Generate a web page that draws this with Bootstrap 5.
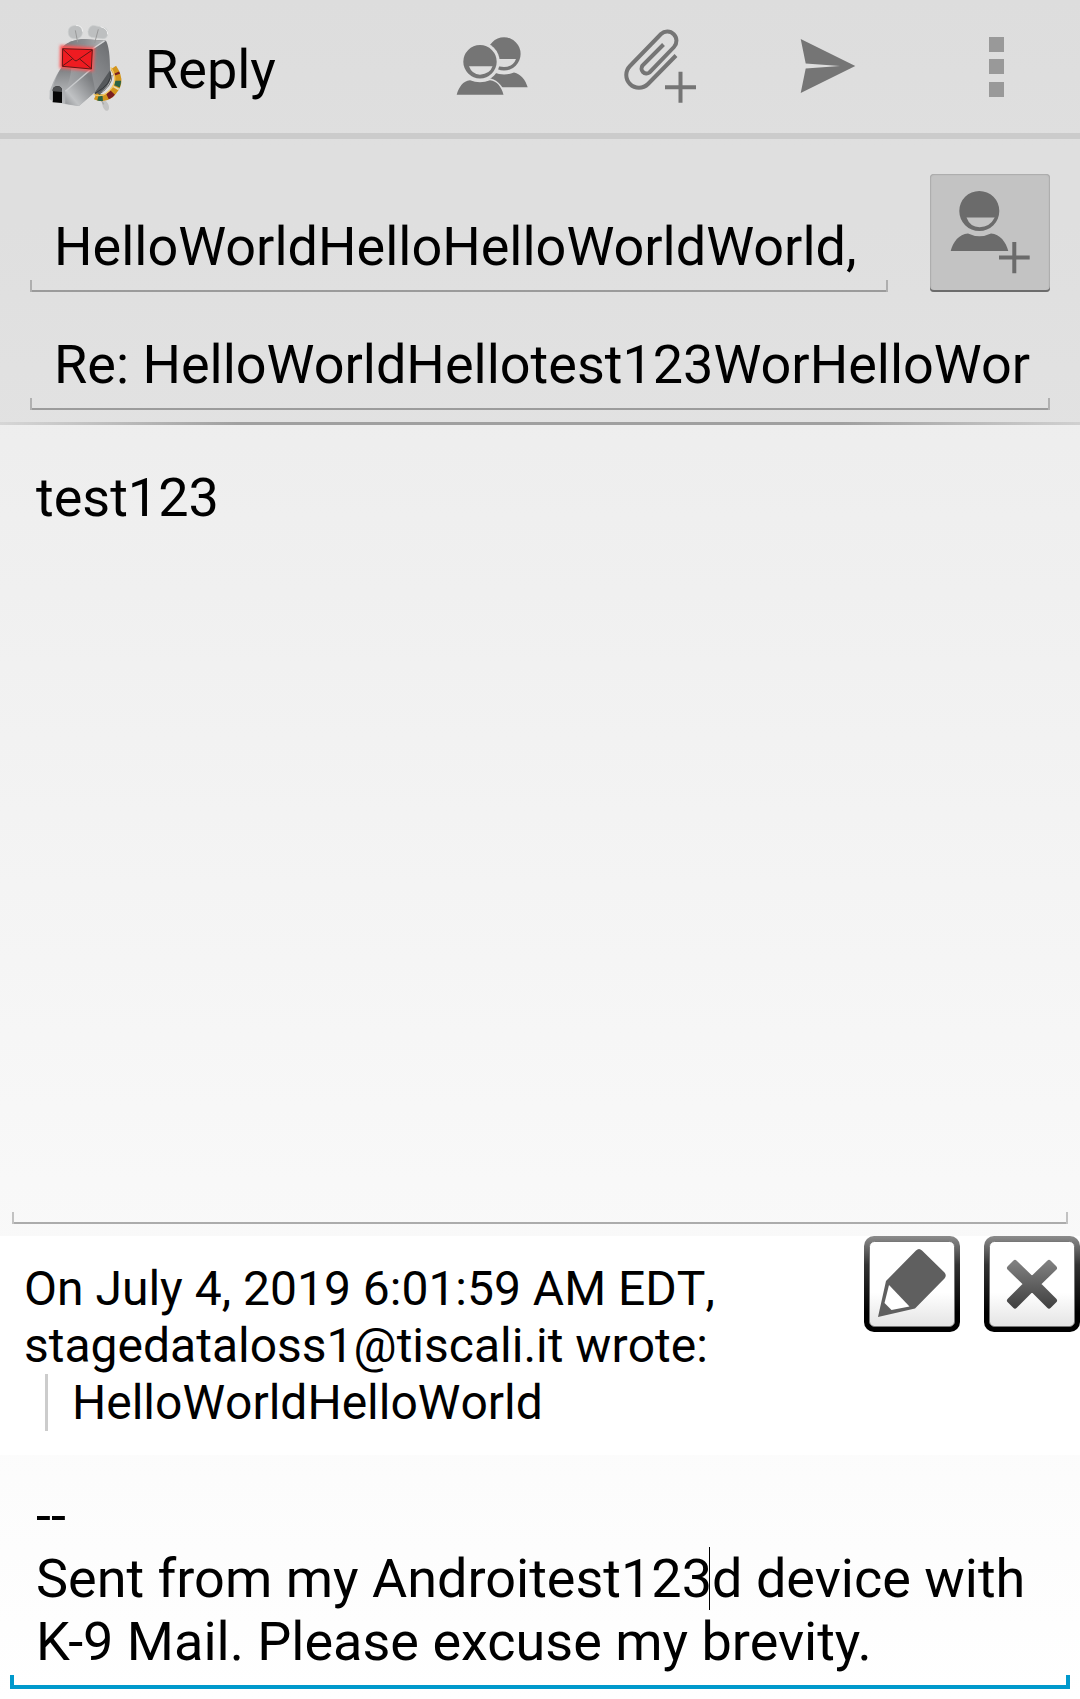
<!DOCTYPE html>
<html lang="en">
<head>
<meta charset="utf-8">
<meta name="viewport" content="width=device-width, initial-scale=1">
<title>Reply</title>
<link href="https://cdn.jsdelivr.net/npm/bootstrap@5.3.0/dist/css/bootstrap.min.css" rel="stylesheet">
<style>
  body {
    font-family: Roboto, "Liberation Sans", sans-serif;
    color: #000;
    font-size: 54px;
    line-height: 63px;
    background: linear-gradient(#e8e8e8, #fff) no-repeat;
  }
  svg { display: block; }

  .action-bar { background: rgba(0, 0, 0, .047); border-bottom: 6px solid #cbcbcb; height: 139px; padding-left: 36px; }
  .action-title { font-size: 54px; line-height: 63px; font-weight: 400; padding-top: 5px; margin-left: 13px; }
  .action-btn { width: 168px; height: 130px; border-radius: 0; }

  .compose-head { background: rgba(0, 0, 0, .047); padding: 35px 30px 12px; }
  .head-rule { height: 3px; background: linear-gradient(90deg, #d6d6d6, #a0a0a0 22%, #a0a0a0 78%, #d0d0d0); }
  .address-row { gap: 42px; margin-bottom: 28px; }

  /* Text field with a bottom line and short upright ends */
  .holo {
    --line: rgba(0, 0, 0, .31);
    --edge: rgba(0, 0, 0, .22);
    display: block;
    width: 100%;
    border: 0;
    border-radius: 0;
    outline: 0;
    resize: none;
    overflow: hidden;
    color: #000;
    font-size: 54px;
    line-height: 63px;
    background:
      linear-gradient(var(--line), var(--line)) 2px 100% / calc(100% - 4px) 2px no-repeat,
      linear-gradient(var(--edge), var(--edge)) 0 100% / 2px 12px no-repeat,
      linear-gradient(var(--edge), var(--edge)) 100% 100% / 2px 12px no-repeat;
  }
  .holo-input { height: 90px; padding: 13px 18px 14px 24px; }
  .holo-message { padding: 41px 24px 0; }
  .holo-signature {
    height: 205px;
    padding: 0 26px;
    background:
      linear-gradient(#0099cc, #0099cc) 0 100% / 100% 4px no-repeat,
      linear-gradient(#0099cc, #0099cc) 0 100% / 4px 14px no-repeat,
      linear-gradient(#0099cc, #0099cc) 100% 100% / 4px 14px no-repeat;
  }
  .add-contact {
    width: 120px;
    height: 118px;
    background: #c3c3c3;
    border: 0;
    border-radius: 4px;
    box-shadow: inset 0 -2px 0 #6c6c6c, inset 0 0 2px rgba(0, 0, 0, .4);
  }

  .message-area { padding: 0 12px 12px; min-height: 300px; }
  .quoted { background: #fff; font-size: 48px; line-height: 57px; font-kerning: none; }
  .quoted-text { padding: 24px; }
  .quoted-text blockquote { border-left: 3px solid #ccc; margin: 0 0 0 21px; padding-left: 24px; font-size: 48px; }
  .signature-area { padding: 29px 10px 10px; }
  .caret { left: 709px; top: 92px; width: 1px; height: 63px; background: #000; }
</style>
</head>
<body>
<div class="d-flex flex-column min-vh-100">
  <header class="action-bar d-flex align-items-center">
    <svg width="96" height="96" viewBox="18 24 288 288" aria-hidden="true">
      <defs>
        <linearGradient id="k9top" x1="0" y1="0" x2="1" y2="0"><stop offset="0" stop-color="#77797c"/><stop offset=".5" stop-color="#8d8f92"/><stop offset="1" stop-color="#b4b6b8"/></linearGradient>
        <linearGradient id="k9side" x1="0" y1="1" x2="1" y2="0"><stop offset="0" stop-color="#c4c6c8"/><stop offset=".5" stop-color="#929497"/><stop offset="1" stop-color="#696b6e"/></linearGradient>
        <linearGradient id="k9cheek" x1="0" y1="1" x2=".8" y2=".2"><stop offset="0" stop-color="#8f9194"/><stop offset=".3" stop-color="#c0c2c4"/><stop offset="1" stop-color="#7c7e81"/></linearGradient>
        <linearGradient id="k9nose" x1="0" y1="0" x2="0" y2="1"><stop offset="0" stop-color="#797b7e"/><stop offset="1" stop-color="#b0b2b4"/></linearGradient>
        <filter id="k9glow" x="-30%" y="-40%" width="160%" height="180%"><feGaussianBlur stdDeviation="5"/></filter>
      </defs>
      <ellipse cx="227" cy="284" rx="9" ry="16" fill="#c4c4c4" transform="rotate(-20 227 284)"/>
      <path d="M213 266l8 14" stroke="#aaa" stroke-width="4"/>
      <path d="M238 172Q259 214 198 256L190 238 232 180Z" fill="#55585b"/>
      <path d="M241 184Q249 217 194 248M246 192Q248 226 200 255" fill="none" stroke="#25282b" stroke-width="2"/>
      <path d="M250 170Q282 216 240 252Q219 267 196 256" fill="none" stroke="#d3951c" stroke-width="20"/>
      <path d="M250 170Q282 216 240 252Q219 267 196 256" fill="none" stroke="#2b6345" stroke-width="19" stroke-dasharray="0 42 17 57 14 100"/>
      <path d="M250 170Q282 216 240 252Q219 267 196 256" fill="none" stroke="#7b1f20" stroke-width="19" stroke-dasharray="0 17 7 58 19 200"/>
      <path d="M250 170Q282 216 240 252Q219 267 196 256" fill="none" stroke="#eadcab" stroke-width="19" stroke-dasharray="0 62 5 200"/>
      <path d="M242 169Q272 214 229 247Q211 259 191 250" fill="none" stroke="#f2c765" stroke-width="4"/>
      <path d="M98 108Q118 87 158 84L228 89Q240 110 240 178L196 242 147 285Q95 281 59 264L61 235Q80 185 98 166Z" fill="url(#k9side)"/>
      <path d="M98 108Q118 87 158 84L228 89 187 116Z" fill="url(#k9top)"/>
      <path d="M97 166L124 172Q121 207 106 241L97 228 68 233Q76 197 97 166Z" fill="url(#k9nose)"/>
      <path d="M106 241L184 178 196 242 147 285 106 278Z" fill="url(#k9cheek)"/>
      <path d="M106 241L183 175" stroke="#c9cbcd" stroke-width="4"/>
      <path d="M187 114L223 90" stroke="#d5d6d7" stroke-width="4"/>
      <path d="M68 274V237Q70 226 82 226Q96 226 96 239V276Z" fill="#060606"/>
      <path d="M68 241V236Q70 226 82 226Q96 226 96 239V243Z" fill="#4e5052"/>
      <path d="M59 238L68 240 68 271 59 265Z" fill="#b9bbbd"/>
      <path d="M96 109L188 115 185 175 95 166Z" fill="#ff3434" stroke="#ff5555" stroke-width="12" filter="url(#k9glow)"/>
      <path d="M98 113L187 116 184 174 97 166Z" fill="#ef1b21" stroke="#611717" stroke-width="3"/>
      <path d="M98 114L134 148Q138 152 143 147L187 117M97 165L128 143M184 173L149 144" fill="none" stroke="#611717" stroke-width="3"/>
      <g fill="#bdbfc0" stroke="#cccecf" stroke-width="2">
        <rect x="115" y="44" width="42" height="39" rx="17"/>
        <path d="M180 48Q186 43 194 44L226 51Q236 58 232 74Q229 84 218 83L184 79Q173 74 174 62Q175 54 180 48Z"/>
      </g>
      <path d="M136 58L143 94M205 55L194 96" stroke="#999" stroke-width="3"/>
      <path d="M138 43Q157 43 158 62M212 47Q234 53 233 70" fill="none" stroke="#f0f0f0" stroke-width="3"/>
    </svg>
    <h1 class="action-title mb-0 me-auto">Reply</h1>
    <button type="button" class="btn action-btn p-0 d-flex align-items-center justify-content-center align-self-start" aria-label="Reply to all">
      <svg width="96" height="96" viewBox="0 0 96 96" fill="#757575">
        <mask id="behind"><rect width="96" height="96" fill="#fff"/><circle cx="36" cy="44.7" r="19.7" fill="#000"/><path d="M12 78C15 68 20 61 28 61H44C53 62 59 69 62 78Z" fill="#000"/></mask>
        <g mask="url(#behind)">
          <path fill-rule="evenodd" d="M60 20.3A16.6 16.6 0 1 1 60 53.5A16.6 16.6 0 1 1 60 20.3ZM46 42H72Q69 50 60 50Q51 50 46 42Z"/>
          <path d="M45 58Q47 56 50 55.500Q60 59.500 70 55.500C77 57 81.500 63 83.700 70.300H45Z"/>
        </g>
        <path fill-rule="evenodd" d="M36 28A16.700 16.700 0 1 1 36 61.400A16.700 16.700 0 1 1 36 28ZM25 49.300Q28 57.500 36 57.700Q46 57 48.500 49.300Z"/>
        <path d="M12.700 77.700C15 70 19 64 26 63.300Q36 67 46 63.300C53 64 57.500 70 59.500 77.700Z"/>
      </svg>
    </button>
    <button type="button" class="btn action-btn p-0 d-flex align-items-center justify-content-center align-self-start" aria-label="Add attachment">
      <svg width="96" height="96" viewBox="0 0 96 96" fill="none" stroke="#757575" stroke-width="4">
        <path d="M64 38.500L36 67A12.700 12.700 0 0 1 18 49L49 17A9.200 9.200 0 0 1 62 30L37.500 55.500A5 5 0 0 1 30.500 48.500L51.500 27.500"/>
        <path d="M53 70.300H84M68.500 54.700V85.700"/>
      </svg>
    </button>
    <button type="button" class="btn action-btn p-0 d-flex align-items-center justify-content-center align-self-start" aria-label="Send">
      <svg width="96" height="96" viewBox="0 0 96 96" fill="#757575">
        <path d="M20.700 22L75.300 49 20.700 76 25.700 51.500 60 49 25.700 46.500Z"/>
      </svg>
    </button>
    <button type="button" class="btn action-btn p-0 d-flex align-items-center justify-content-center align-self-start" aria-label="More options">
      <svg width="96" height="96" viewBox="0 0 96 96" fill="#999">
        <path d="M41 20h15v15h-15zM41 42h15v15h-15zM41 65h15v15h-15z"/>
      </svg>
    </button>
  </header>

  <main class="d-flex flex-column flex-grow-1">
    <section class="compose-head">
      <div class="address-row d-flex align-items-end">
        <input type="text" class="holo holo-input flex-fill" aria-label="To" value="HelloWorldHelloHelloWorldWorld,">
        <button type="button" class="add-contact flex-shrink-0 p-0" aria-label="Add contact">
          <svg width="120" height="118" viewBox="0 0 120 118" fill="#6b6b6b">
            <path fill-rule="evenodd" d="M49.300 17A20 20 0 1 1 49.300 57A20 20 0 1 1 49.300 17ZM36.500 43.500Q40 53 49.500 53.300Q60 53 64.700 43.500Z"/>
            <path d="M20.700 77C23 68 29 60 38 59.500Q49.500 65 61 59.500C70 60 76 68 78.300 77Z"/>
            <path d="M69 83.500H99.700M84.300 68V99.300" stroke="#6b6b6b" stroke-width="4"/>
          </svg>
        </button>
      </div>
      <input type="text" class="holo holo-input" aria-label="Subject" value="Re: HelloWorldHellotest123WorHelloWor">
    </section>
    <div class="head-rule"></div>

    <section class="message-area d-flex flex-grow-1">
      <textarea class="holo holo-message" aria-label="Message text">test123</textarea>
    </section>

    <section class="quoted d-flex align-items-start">
      <div class="quoted-text flex-fill">
        On July 4, 2019 6:01:59 AM EDT, stagedataloss1@tiscali.it wrote:
        <blockquote>HelloWorldHelloWorld</blockquote>
      </div>
      <div class="d-flex gap-4 flex-shrink-0">
        <button type="button" class="btn p-0 border-0" aria-label="Edit quoted text">
          <svg width="96" height="96" viewBox="0 0 96 96">
            <defs>
              <linearGradient id="frame" x1="0" y1="0" x2="0" y2="1"><stop offset="0" stop-color="#8c8c8c"/><stop offset=".3" stop-color="#333"/><stop offset=".8" stop-color="#000"/></linearGradient>
              <linearGradient id="face" x1="0" y1="0" x2="0" y2="1"><stop offset=".6" stop-color="#fff"/><stop offset="1" stop-color="#e4e4e4"/></linearGradient>
              <linearGradient id="ink" x1="0" y1="20" x2="0" y2="75" gradientUnits="userSpaceOnUse"><stop offset="0" stop-color="#888"/><stop offset="1" stop-color="#3c3c3c"/></linearGradient>
            </defs>
            <rect width="96" height="96" rx="10" fill="url(#frame)"/>
            <rect x="5.500" y="5.500" width="85" height="85" rx="5" fill="url(#face)" stroke="#777" stroke-width="1"/>
            <path d="M52 14.500Q55 11.500 58 14.500L80.500 36.500Q83 39.500 80.500 42.500L51 72.500 14 81 22 45Z" fill="#5f5f5f"/>
            <path d="M25 49L45.500 70.500 27.500 74 20.500 67Z" fill="#fff"/>
          </svg>
        </button>
        <button type="button" class="btn p-0 border-0" aria-label="Remove quoted text">
          <svg width="96" height="96" viewBox="0 0 96 96">
            <rect width="96" height="96" rx="10" fill="url(#frame)"/>
            <rect x="5.500" y="5.500" width="85" height="85" rx="5" fill="url(#face)" stroke="#777" stroke-width="1"/>
            <path d="M31 26.500L48 43 65 26.500 70.500 32 54 48 70.500 64.500 65 70 48 53 31 70 25.500 64.500 42 48 25.500 32Z" fill="url(#ink)" stroke="url(#ink)" stroke-width="5" stroke-linejoin="round"/>
          </svg>
        </button>
      </div>
    </section>

    <section class="signature-area position-relative">
      <textarea class="holo holo-signature" aria-label="Signature">--
Sent from my Androitest123d device with K-9 Mail. Please excuse my brevity.</textarea>
      <span class="caret position-absolute"></span>
    </section>
  </main>
</div>
<script src="https://cdn.jsdelivr.net/npm/bootstrap@5.3.0/dist/js/bootstrap.bundle.min.js"></script>
</body>
</html>
